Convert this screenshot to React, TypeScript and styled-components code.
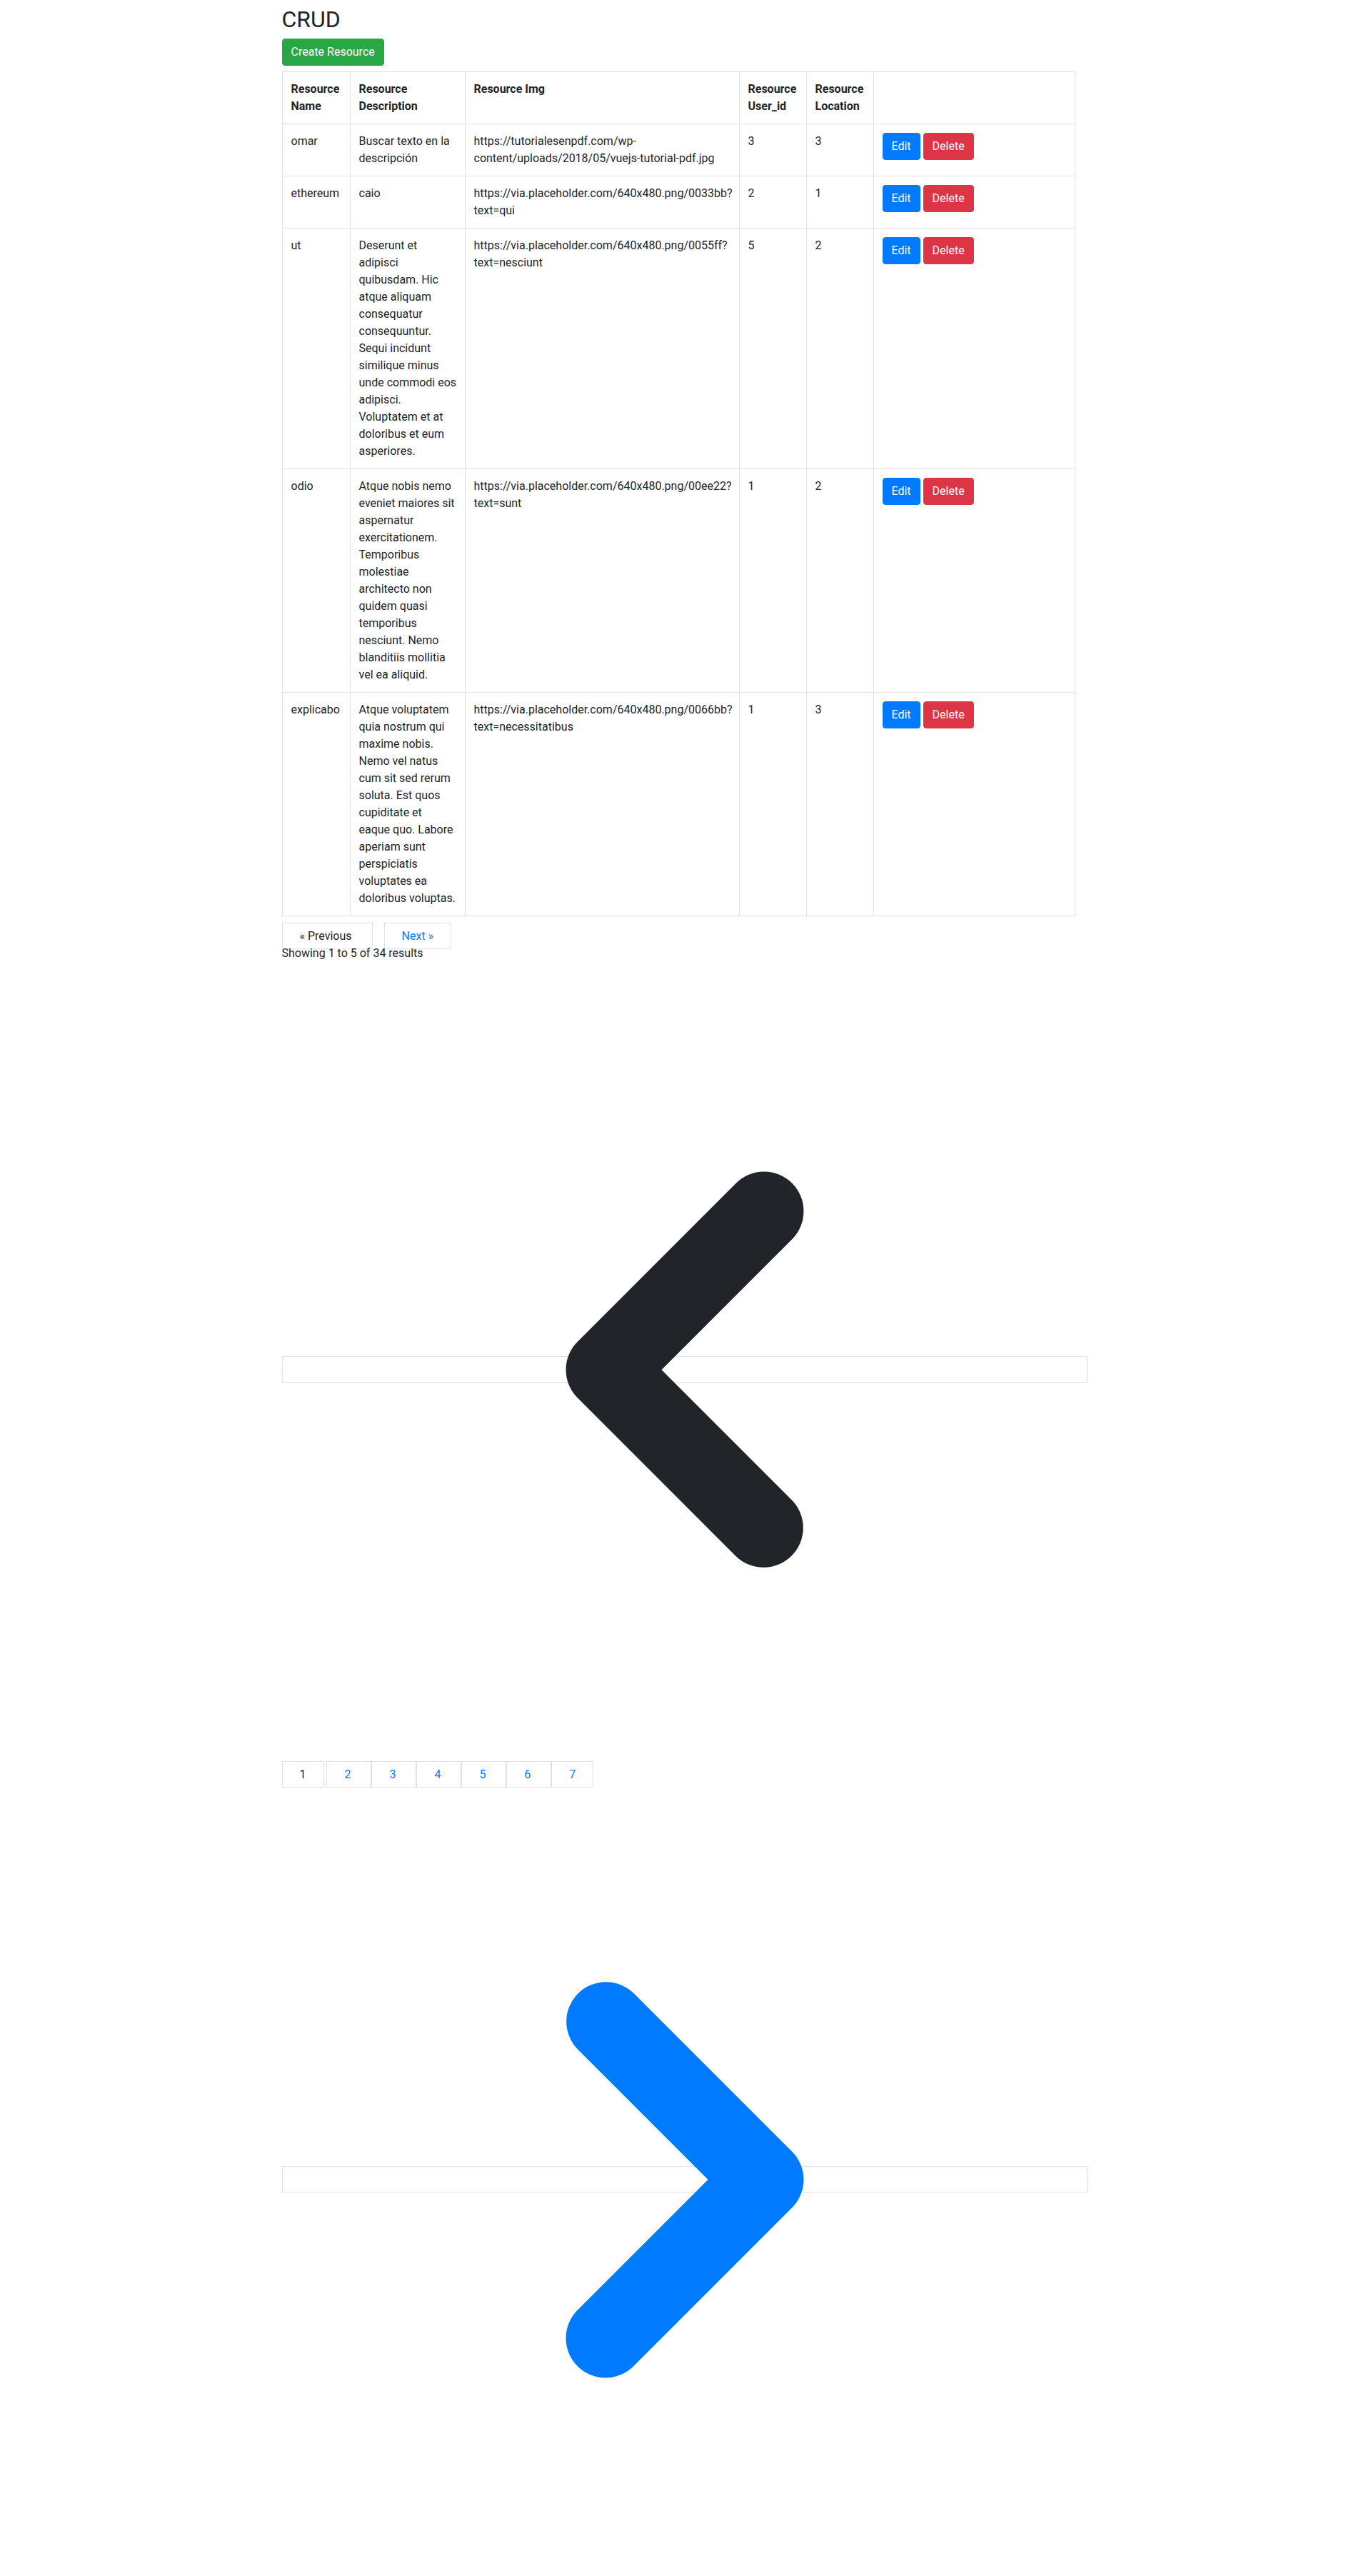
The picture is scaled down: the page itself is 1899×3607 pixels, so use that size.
import React from "react";
import styled, { createGlobalStyle } from "styled-components";

const FONT = `"Segoe UI", Roboto, "Helvetica Neue", Arial, "Noto Sans", sans-serif`;

const GlobalStyle = createGlobalStyle`
  *, *::before, *::after { box-sizing: border-box; }
  html, body { margin: 0; padding: 0; background: #fff; }
  body {
    font-family: ${FONT};
    font-size: 16px;
    font-weight: 400;
    line-height: 1.5;
    color: #212529;
  }
`;

const tones = {
  success: "#28a745",
  primary: "#007bff",
  danger: "#dc3545",
};

const Container = styled.div`
  width: 1140px;
  padding: 0 15px;
  margin: 0 auto;
`;

const Title = styled.h2`
  margin: 8px 0;
  font-size: 32px;
  font-weight: 400;
  line-height: 1.2;
`;

const Toolbar = styled.div`
  display: flex;
  margin-bottom: 8px;
`;

const Btn = styled.a<{ $tone: keyof typeof tones }>`
  display: inline-block;
  padding: 6px 12px;
  font-size: 16px;
  line-height: 1.5;
  color: #fff;
  background: ${(p) => tones[p.$tone]};
  border: 1px solid ${(p) => tones[p.$tone]};
  border-radius: 4px;
  text-decoration: none;
  vertical-align: middle;
  cursor: pointer;
`;

const Table = styled.table`
  width: 100%;
  table-layout: fixed;
  border-collapse: collapse;
  margin-bottom: 16px;
  color: #212529;
`;

const Th = styled.th`
  padding: 12px;
  border: 1px solid #dee2e6;
  vertical-align: top;
  text-align: left;
  font-weight: 700;
`;

// description and url cells keep the line breaks of the original page
const Td = styled.td<{ $lines?: boolean }>`
  padding: 12px;
  border: 1px solid #dee2e6;
  vertical-align: top;
  white-space: ${(p) => (p.$lines ? "pre" : "normal")};
`;

const Nav = styled.nav``;

const Summary = styled.p`
  margin: 0 0 16px;
`;

const PageBox = styled.span<{ $icon?: boolean }>`
  padding: ${(p) => (p.$icon ? "8px" : "8px 24px")};
  background: #fff;
  border: 1px solid #dee2e6;
  color: #212529;
`;

const PageLink = styled.a<{ $icon?: boolean; $push?: boolean }>`
  padding: ${(p) => (p.$icon ? "8px" : "8px 24px")};
  margin-left: ${(p) => (p.$push ? "16px" : "0")};
  background: #fff;
  border: 1px solid #dee2e6;
  color: #007bff;
  text-decoration: none;
`;

const ShadowGroup = styled.span`
  box-shadow: 0 2px 4px rgba(0, 0, 0, 0.075);
`;

// unsized pagination icons: they stretch to the container width
const ChevronSvg = styled.svg`
  width: 1110px;
  height: 1110px;
  vertical-align: middle;
  overflow: hidden;
  fill: currentColor;
`;

const LEFT =
  "M12.707 5.293a1 1 0 010 1.414L9.414 10l3.293 3.293a1 1 0 01-1.414 1.414l-4-4a1 1 0 010-1.414l4-4a1 1 0 011.414 0z";
const RIGHT =
  "M7.293 14.707a1 1 0 010-1.414L10.586 10 7.293 6.707a1 1 0 011.414-1.414l4 4a1 1 0 010 1.414l-4 4a1 1 0 01-1.414 0z";

function Chevron({ d }: { d: string }) {
  return (
    <ChevronSvg viewBox="0 0 20 20">
      <path fillRule="evenodd" clipRule="evenodd" d={d} />
    </ChevronSvg>
  );
}

const resources = [
  {
    name: "omar",
    desc: "Buscar texto en la\ndescripción",
    img: "https://tutorialesenpdf.com/wp-\ncontent/uploads/2018/05/vuejs-tutorial-pdf.jpg",
    user: 3,
    loc: 3,
  },
  {
    name: "ethereum",
    desc: "caio",
    img: "https://via.placeholder.com/640x480.png/0033bb?\ntext=qui",
    user: 2,
    loc: 1,
  },
  {
    name: "ut",
    desc: "Deserunt et\nadipisci\nquibusdam. Hic\natque aliquam\nconsequatur\nconsequuntur.\nSequi incidunt\nsimilique minus\nunde commodi eos\nadipisci.\nVoluptatem et at\ndoloribus et eum\nasperiores.",
    img: "https://via.placeholder.com/640x480.png/0055ff?\ntext=nesciunt",
    user: 5,
    loc: 2,
  },
  {
    name: "odio",
    desc: "Atque nobis nemo\neveniet maiores sit\naspernatur\nexercitationem.\nTemporibus\nmolestiae\narchitecto non\nquidem quasi\ntemporibus\nnesciunt. Nemo\nblanditiis mollitia\nvel ea aliquid.",
    img: "https://via.placeholder.com/640x480.png/00ee22?\ntext=sunt",
    user: 1,
    loc: 2,
  },
  {
    name: "explicabo",
    desc: "Atque voluptatem\nquia nostrum qui\nmaxime nobis.\nNemo vel natus\ncum sit sed rerum\nsoluta. Est quos\ncupiditate et\neaque quo. Labore\naperiam sunt\nperspiciatis\nvoluptates ea\ndoloribus voluptas.",
    img: "https://via.placeholder.com/640x480.png/0066bb?\ntext=necessitatibus",
    user: 1,
    loc: 3,
  },
];

export default function App(): JSX.Element {
  return (
    <>
      <GlobalStyle />
      <Container>
        <Title>CRUD</Title>
        <Toolbar>
          <Btn $tone="success" href="#">
            Create Resource
          </Btn>
        </Toolbar>
        <Table>
          <colgroup>
            <col style={{ width: 95 }} />
            <col style={{ width: 161 }} />
            <col style={{ width: 384 }} />
            <col style={{ width: 94 }} />
            <col style={{ width: 94 }} />
            <col style={{ width: 282 }} />
          </colgroup>
          <thead>
            <tr>
              <Th>Resource Name</Th>
              <Th>Resource Description</Th>
              <Th>Resource Img</Th>
              <Th>Resource User_id</Th>
              <Th>Resource Location</Th>
              <Th></Th>
            </tr>
          </thead>
          <tbody>
            {resources.map((r) => (
              <tr key={r.name}>
                <Td>{r.name}</Td>
                <Td $lines>{r.desc}</Td>
                <Td $lines>{r.img}</Td>
                <Td>{r.user}</Td>
                <Td>{r.loc}</Td>
                <Td>
                  <Btn $tone="primary" href="#">
                    Edit
                  </Btn>{" "}
                  <Btn $tone="danger" href="#">
                    Delete
                  </Btn>
                </Td>
              </tr>
            ))}
          </tbody>
        </Table>
        <Nav>
          <div>
            <PageBox>« Previous </PageBox>
            <PageLink $push href="#">
              Next »{" "}
            </PageLink>
          </div>
          <div>
            <div>
              <Summary>Showing 1 to 5 of 34 results</Summary>
            </div>
            <div>
              <ShadowGroup>
                <span>
                  <PageBox $icon>
                    <Chevron d={LEFT} />
                  </PageBox>
                </span>{" "}
                <span>
                  <PageBox>1</PageBox>
                </span>{" "}
                {[2, 3, 4, 5, 6, 7].map((n) => (
                  <PageLink key={n} href="#">
                    {n}{" "}
                  </PageLink>
                ))}
                <PageLink $icon href="#">
                  <Chevron d={RIGHT} />
                </PageLink>
              </ShadowGroup>
            </div>
          </div>
        </Nav>
      </Container>
    </>
  );
}
